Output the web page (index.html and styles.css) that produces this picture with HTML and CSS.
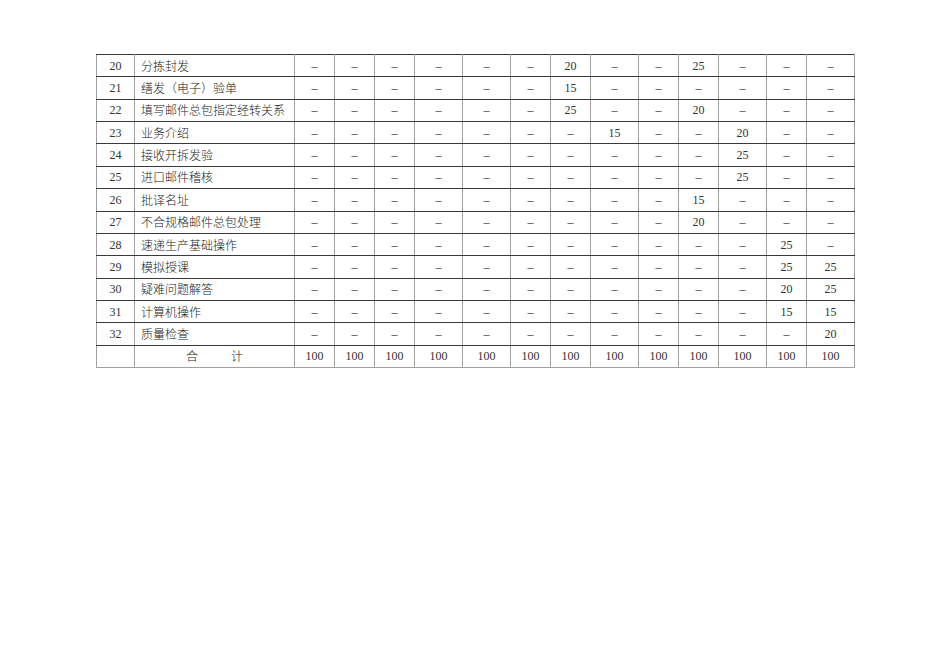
FILE: index.html
```html
<!DOCTYPE html>
<html lang="zh">
<head>
<meta charset="utf-8">
<title>表</title>
<link rel="stylesheet" href="styles.css">
</head>
<body>
<table class="grid">
<colgroup>
<col class="c38"><col class="c160">
<col class="c40"><col class="c40"><col class="c40"><col class="c48"><col class="c48"><col class="c40"><col class="c40"><col class="c48"><col class="c40"><col class="c40"><col class="c48"><col class="c40"><col class="c48">
</colgroup>
<tbody>
<tr><td class="no">20</td><td class="name">分拣封发</td><td>–</td><td>–</td><td>–</td><td>–</td><td>–</td><td>–</td><td>20</td><td>–</td><td>–</td><td>25</td><td>–</td><td>–</td><td>–</td></tr>
<tr><td class="no">21</td><td class="name">缮发（电子）验单</td><td>–</td><td>–</td><td>–</td><td>–</td><td>–</td><td>–</td><td>15</td><td>–</td><td>–</td><td>–</td><td>–</td><td>–</td><td>–</td></tr>
<tr><td class="no">22</td><td class="name">填写邮件总包指定经转关系</td><td>–</td><td>–</td><td>–</td><td>–</td><td>–</td><td>–</td><td>25</td><td>–</td><td>–</td><td>20</td><td>–</td><td>–</td><td>–</td></tr>
<tr><td class="no">23</td><td class="name">业务介绍</td><td>–</td><td>–</td><td>–</td><td>–</td><td>–</td><td>–</td><td>–</td><td>15</td><td>–</td><td>–</td><td>20</td><td>–</td><td>–</td></tr>
<tr><td class="no">24</td><td class="name">接收开拆发验</td><td>–</td><td>–</td><td>–</td><td>–</td><td>–</td><td>–</td><td>–</td><td>–</td><td>–</td><td>–</td><td>25</td><td>–</td><td>–</td></tr>
<tr><td class="no">25</td><td class="name">进口邮件稽核</td><td>–</td><td>–</td><td>–</td><td>–</td><td>–</td><td>–</td><td>–</td><td>–</td><td>–</td><td>–</td><td>25</td><td>–</td><td>–</td></tr>
<tr><td class="no">26</td><td class="name">批译名址</td><td>–</td><td>–</td><td>–</td><td>–</td><td>–</td><td>–</td><td>–</td><td>–</td><td>–</td><td>15</td><td>–</td><td>–</td><td>–</td></tr>
<tr><td class="no">27</td><td class="name">不合规格邮件总包处理</td><td>–</td><td>–</td><td>–</td><td>–</td><td>–</td><td>–</td><td>–</td><td>–</td><td>–</td><td>20</td><td>–</td><td>–</td><td>–</td></tr>
<tr><td class="no">28</td><td class="name">速递生产基础操作</td><td>–</td><td>–</td><td>–</td><td>–</td><td>–</td><td>–</td><td>–</td><td>–</td><td>–</td><td>–</td><td>–</td><td>25</td><td>–</td></tr>
<tr><td class="no">29</td><td class="name">模拟授课</td><td>–</td><td>–</td><td>–</td><td>–</td><td>–</td><td>–</td><td>–</td><td>–</td><td>–</td><td>–</td><td>–</td><td>25</td><td>25</td></tr>
<tr><td class="no">30</td><td class="name">疑难问题解答</td><td>–</td><td>–</td><td>–</td><td>–</td><td>–</td><td>–</td><td>–</td><td>–</td><td>–</td><td>–</td><td>–</td><td>20</td><td>25</td></tr>
<tr><td class="no">31</td><td class="name">计算机操作</td><td>–</td><td>–</td><td>–</td><td>–</td><td>–</td><td>–</td><td>–</td><td>–</td><td>–</td><td>–</td><td>–</td><td>15</td><td>15</td></tr>
<tr><td class="no">32</td><td class="name">质量检查</td><td>–</td><td>–</td><td>–</td><td>–</td><td>–</td><td>–</td><td>–</td><td>–</td><td>–</td><td>–</td><td>–</td><td>–</td><td>20</td></tr>
<tr class="total"><td class="no"></td><td class="sum"><span class="w1">合</span><span>计</span></td><td>100</td><td>100</td><td>100</td><td>100</td><td>100</td><td>100</td><td>100</td><td>100</td><td>100</td><td>100</td><td>100</td><td>100</td><td>100</td></tr>
</tbody>
</table>
</body>
</html>
```
FILE: styles.css
```css
html, body {
  margin: 0;
  padding: 0;
  background: #ffffff;
}
body {
  font-family: "Liberation Serif", "Noto Sans CJK SC", serif;
  font-size: 12px;
  color: #333;
}
.grid {
  border-collapse: collapse;
  table-layout: fixed;
  width: 758px;
  margin: 54px 0 0 96px;
}
.c38 { width: 38px; }
.c160 { width: 160px; }
.c40 { width: 40px; }
.c48 { width: 48px; }
.grid tr {
  height: 22.36px;
}
.grid td {
  padding: 0;
  text-align: center;
  vertical-align: middle;
  line-height: 14px;
  border-top: 1px solid #3a3a3a;
  border-bottom: 1px solid #3a3a3a;
  border-left: 1px solid #a0a0a0;
  border-right: 1px solid #a0a0a0;
  white-space: nowrap;
}
.grid tr.total td {
  border-bottom: 1px solid #a0a0a0;
}
.grid td.name {
  text-align: left;
  padding-left: 6px;
  font-family: "Noto Sans CJK SC", sans-serif;
  font-size: 12px;
  font-weight: 300;
  color: #222;
}
.grid td.sum {
  font-family: "Noto Sans CJK SC", sans-serif;
  font-weight: 300;
  color: #222;
}
.w1 {
  margin-right: 33px;
}
```
